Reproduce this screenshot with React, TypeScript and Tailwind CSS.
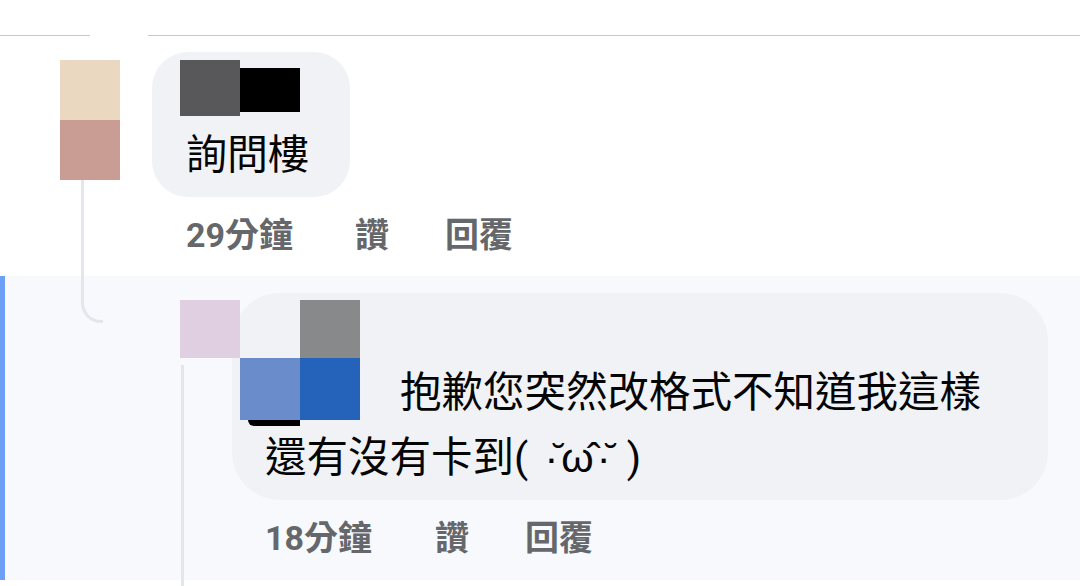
const font = "font-['Roboto','Noto_Sans_CJK_TC',sans-serif]";

function Meta({ time, timeW }: { time: string; timeW: string }) {
  return (
    <div className={`flex items-center text-[34px] leading-[41px] font-bold text-[#65676b]`}>
      <span className={timeW}>{time}</span>
      <span className="w-[90px]">讚</span>
      <span>回覆</span>
    </div>
  );
}

export default function App() {
  return (
    <div className={`relative w-[1080px] h-[586px] bg-white overflow-hidden ${font}`}>
      {/* top divider */}
      <div className="h-[35px]" />
      <div className="flex h-px">
        <div className="w-[90px] bg-[#c9c9c9]" />
        <div className="w-[58px]" />
        <div className="flex-1 bg-[#c9c9c9]" />
      </div>

      {/* first comment */}
      <div className="h-[240px] flex pl-[60px] pt-[24px]">
        <div className="w-[60px] flex flex-col">
          <div className="h-[60px] bg-[#ead8c0]" />
          <div className="h-[60px] bg-[#c99d94]" />
        </div>
        <div className="ml-[32px] flex flex-col">
          <div className="-mt-[8px] w-[198px] h-[145px] bg-[#f0f2f5] rounded-[36px] pl-[28px] pt-[8px]">
            <div className="flex">
              <div className="w-[60px] h-[56px] bg-[#58585a]" />
              <div className="w-[60px] h-[44px] mt-[8px] bg-black" />
            </div>
            <div className="ml-[6px] mt-[15px] text-[41px] leading-[49px] text-[#050505]">詢問樓</div>
          </div>
          <div className="ml-[34px] mt-[18px]">
            <Meta time="29分鐘" timeW="w-[169px]" />
          </div>
        </div>
      </div>

      {/* reply */}
      <div className="h-[304px] bg-[#f7f9fc] border-l-[5px] border-[#6f9ef6] flex pl-[175px] pt-[24px]">
        <div className="relative z-10 w-[52px] shrink-0">
          <div className="w-[60px] h-[58px] bg-[#e0cee1]" />
        </div>
        <div className="flex flex-col">
          <div className="-mt-[7px] w-[816px] h-[207px] bg-[#f0f2f5] rounded-[48px] pl-[33px] pt-[7px]">
            <div className="flex items-end">
              <div className="-ml-[25px] grid grid-cols-[60px_60px] grid-rows-[58px_62px]">
                <div />
                <div className="bg-[#88898b]" />
                <div className="relative bg-[#6a8ccb]">
                  <div className="absolute left-[8px] top-full w-[52px] h-[6px] bg-black rounded-bl-[10px]" />
                </div>
                <div className="bg-[#2563bb]" />
              </div>
              <div className="ml-[40px] text-[41.5px] leading-[50px] text-[#050505] mb-[2px]">抱歉您突然改格式不知道我這樣</div>
            </div>
            <div className="mt-[13px] text-[41.5px] leading-[50px] text-[#050505]">
              還有沒有卡到<span className="tracking-[3px]">( ·̆ω̂·̆ )</span>
            </div>
          </div>
          <div className="ml-[33px] mt-[18px]">
            <Meta time="18分鐘" timeW="w-[170px]" />
          </div>
        </div>
      </div>

      {/* thread connectors */}
      <div className="absolute left-[81px] top-[180px] w-[22px] h-[143px] border-l-[3px] border-b-[3px] border-[#e4e6eb] rounded-bl-[20px]" />
      <div className="absolute left-[181px] top-[365px] w-[3px] h-[221px] bg-[#e4e6eb]" />
    </div>
  );
}
